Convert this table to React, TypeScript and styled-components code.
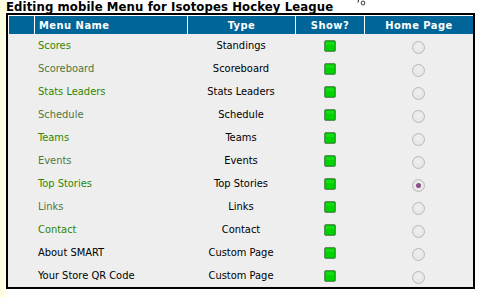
import React from "react";
import styled, { createGlobalStyle } from "styled-components";

const GlobalStyle = createGlobalStyle`
  html, body {
    margin: 0;
    padding: 0;
    background: #ffffff;
  }
  body {
    font-family: "DejaVu Sans Condensed", "DejaVu Sans", Verdana, sans-serif;
  }
`;

const Page = styled.div`
  display: flex;
  min-height: 297px;
`;

const Gutter = styled.div`
  width: 5px;
  background: #ffffe0;
  flex-shrink: 0;
`;

const Content = styled.div`
  position: relative;
  padding-left: 1px;
`;

const Title = styled.h1`
  margin: 0;
  height: 13px;
  font-size: 13px;
  line-height: 13px;
  font-weight: 700;
  letter-spacing: 0.1px;
  color: #000000;
  white-space: nowrap;
`;

const CursorMark = styled.svg`
  position: absolute;
  left: 351px;
  top: 0;
`;

const Grid = styled.table`
  width: 469px;
  border: 2px solid #000000;
  border-collapse: separate;
  border-spacing: 0;
  background: #eeeeee;
  table-layout: fixed;
`;

const HeadCell = styled.th<{ $width: number; $align?: "left" | "center" }>`
  width: ${(p) => p.$width}px;
  height: 19px;
  padding: 0 4px;
  box-sizing: border-box;
  background: #006699;
  color: #ffffff;
  font-size: 11px;
  font-weight: 700;
  letter-spacing: 0.5px;
  text-align: ${(p) => p.$align ?? "center"};
  border-left: 1px solid #ffffff;
  border-top: 1px solid #ffffff;
  white-space: nowrap;
`;

const Cell = styled.td<{ $align?: "left" | "center" }>`
  height: 23px;
  padding: 0 4px;
  box-sizing: border-box;
  font-size: 11px;
  color: #000000;
  text-align: ${(p) => p.$align ?? "center"};
  vertical-align: middle;
  white-space: nowrap;
`;

const MenuLink = styled.a<{ $tone: "link" | "visited" | "plain" }>`
  text-decoration: none;
  color: ${(p) =>
    p.$tone === "link" ? "#2f8700" : p.$tone === "visited" ? "#4f7742" : "#000000"};
`;

const Radio = styled.span<{ $checked?: boolean }>`
  display: inline-block;
  width: 11px;
  height: 11px;
  margin-top: 3px;
  border-radius: 50%;
  border: 1px solid #b9b9b9;
  background: radial-gradient(circle at 50% 40%, #f0f0f0 0%, #e1e1e1 100%);
  position: relative;
  vertical-align: middle;

  &::after {
    content: "";
    display: ${(p) => (p.$checked ? "block" : "none")};
    position: absolute;
    left: 3px;
    top: 3px;
    width: 5px;
    height: 5px;
    border-radius: 50%;
    background: #8a4f8a;
  }
`;

const ShowIcon = () => (
  <svg width="12" height="12" viewBox="0 0 12 12" style={{ display: "block", margin: "1px auto 0" }}>
    <rect x="0.5" y="0.5" width="11" height="11" rx="1.5" fill="#12a012" stroke="#5f8f5f" />
    <rect x="1.5" y="1.5" width="9" height="9" rx="0.5" fill="#00d400" />
    <rect x="2" y="2" width="8" height="3" fill="#22e022" opacity="0.6" />
  </svg>
);

type Tone = "link" | "visited" | "plain";

interface MenuRow {
  name: string;
  type: string;
  tone: Tone;
  home?: boolean;
}

const rows: MenuRow[] = [
  { name: "Scores", type: "Standings", tone: "link" },
  { name: "Scoreboard", type: "Scoreboard", tone: "visited" },
  { name: "Stats Leaders", type: "Stats Leaders", tone: "link" },
  { name: "Schedule", type: "Schedule", tone: "visited" },
  { name: "Teams", type: "Teams", tone: "link" },
  { name: "Events", type: "Events", tone: "visited" },
  { name: "Top Stories", type: "Top Stories", tone: "link", home: true },
  { name: "Links", type: "Links", tone: "visited" },
  { name: "Contact", type: "Contact", tone: "link" },
  { name: "About SMART", type: "Custom Page", tone: "plain" },
  { name: "Your Store QR Code", type: "Custom Page", tone: "plain" },
];

const App: React.FC = () => {
  return (
    <Page>
      <GlobalStyle />
      <Gutter />
      <Content>
        <Title>Editing mobile Menu for Isotopes Hockey League</Title>
        {/* stray pointer tail above the header */}
        <CursorMark width="12" height="6" viewBox="0 0 12 6">
          <path d="M2.5 0 L2 2.5" stroke="#222" strokeWidth="1" />
          <ellipse cx="7" cy="3" rx="1.8" ry="2" fill="none" stroke="#222" strokeWidth="0.9" />
        </CursorMark>
        <Grid>
          <thead>
            <tr>
              <HeadCell $width={26} />
              <HeadCell $width={153} $align="left">Menu Name</HeadCell>
              <HeadCell $width={108}>Type</HeadCell>
              <HeadCell $width={69}>Show?</HeadCell>
              <HeadCell $width={109}>Home Page</HeadCell>
            </tr>
          </thead>
          <tbody>
            {rows.map((row) => (
              <tr key={row.name}>
                <Cell />
                <Cell $align="left">
                  <MenuLink $tone={row.tone}>{row.name}</MenuLink>
                </Cell>
                <Cell>{row.type}</Cell>
                <Cell>
                  <ShowIcon />
                </Cell>
                <Cell>
                  <Radio $checked={row.home} />
                </Cell>
              </tr>
            ))}
          </tbody>
        </Grid>
      </Content>
    </Page>
  );
};

export default App;
